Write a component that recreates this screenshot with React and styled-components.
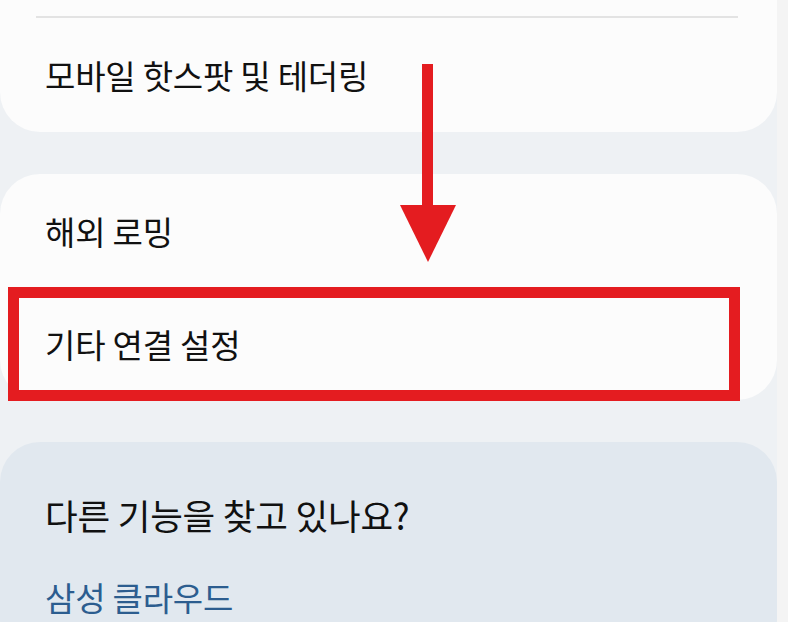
import React from 'react'
import styled, { createGlobalStyle } from 'styled-components'

const GlobalStyle = createGlobalStyle`
  html, body {
    margin: 0;
    padding: 0;
    background: #f4f4f4;
    overflow: hidden;
  }
  body {
    font-family: "Noto Sans CJK KR", "Noto Sans", sans-serif;
    color: #111111;
  }
`

const Screen = styled.div`
  display: flex;
  width: 788px;
  height: 622px;
  overflow: hidden;
`

const Main = styled.div`
  position: relative;
  width: 777px;
  display: flex;
  flex-direction: column;
  gap: 42px;
  background: #eef1f4;
`

const Card = styled.section`
  background: ${p => (p.$tone === 'blue' ? '#e1e8ef' : '#fcfcfc')};
  border-radius: ${p => (p.$cut ? '0 0 40px 40px' : '40px')};
  padding-top: ${p => p.$padTop || 0}px;
`

const Divider = styled.div`
  height: 2px;
  margin: 0 39px 0 36px;
  background: #e3e3e3;
`

const Row = styled.div`
  position: relative;
  height: ${p => p.$height || 114}px;
  display: flex;
  align-items: center;
  padding-left: 45px;
  font-size: 33px;
  letter-spacing: -0.2px;
`

const Highlight = styled.div`
  position: absolute;
  top: 0;
  bottom: -1px;
  left: 8px;
  right: 37px;
  border: 11px solid #e41c20;
  pointer-events: none;
`

const Arrow = styled.svg`
  position: absolute;
  left: 400px;
  top: 64px;
  z-index: 2;
`

const Title = styled.div`
  padding-left: 45px;
  font-size: 35.5px;
  letter-spacing: -0.2px;
  line-height: 44px;
  margin-bottom: 38px;
`

const Link = styled.div`
  padding-left: 45px;
  font-size: 33px;
  letter-spacing: -0.2px;
  line-height: 44px;
  color: #2c5d8f;
  padding-bottom: 40px;
`

export default function App() {
  return (
    <>
      <GlobalStyle />
      <Screen>
        <Main>
          <Card $cut $padTop={16}>
            <Divider />
            <Row $height={114}>모바일 핫스팟 및 테더링</Row>
          </Card>

          <Card>
            <Row $height={113}>해외 로밍</Row>
            <Row $height={113}>
              기타 연결 설정
              <Highlight />
            </Row>
          </Card>

          <Card $tone="blue" $padTop={51}>
            <Title>다른 기능을 찾고 있나요?</Title>
            <Link>삼성 클라우드</Link>
          </Card>

          <Arrow width="56" height="198" viewBox="0 0 56 198">
            <rect x="22" y="0" width="11" height="142" fill="#e41c20" />
            <polygon points="0,141 56,141 28,198" fill="#e41c20" />
          </Arrow>
        </Main>
      </Screen>
    </>
  )
}
